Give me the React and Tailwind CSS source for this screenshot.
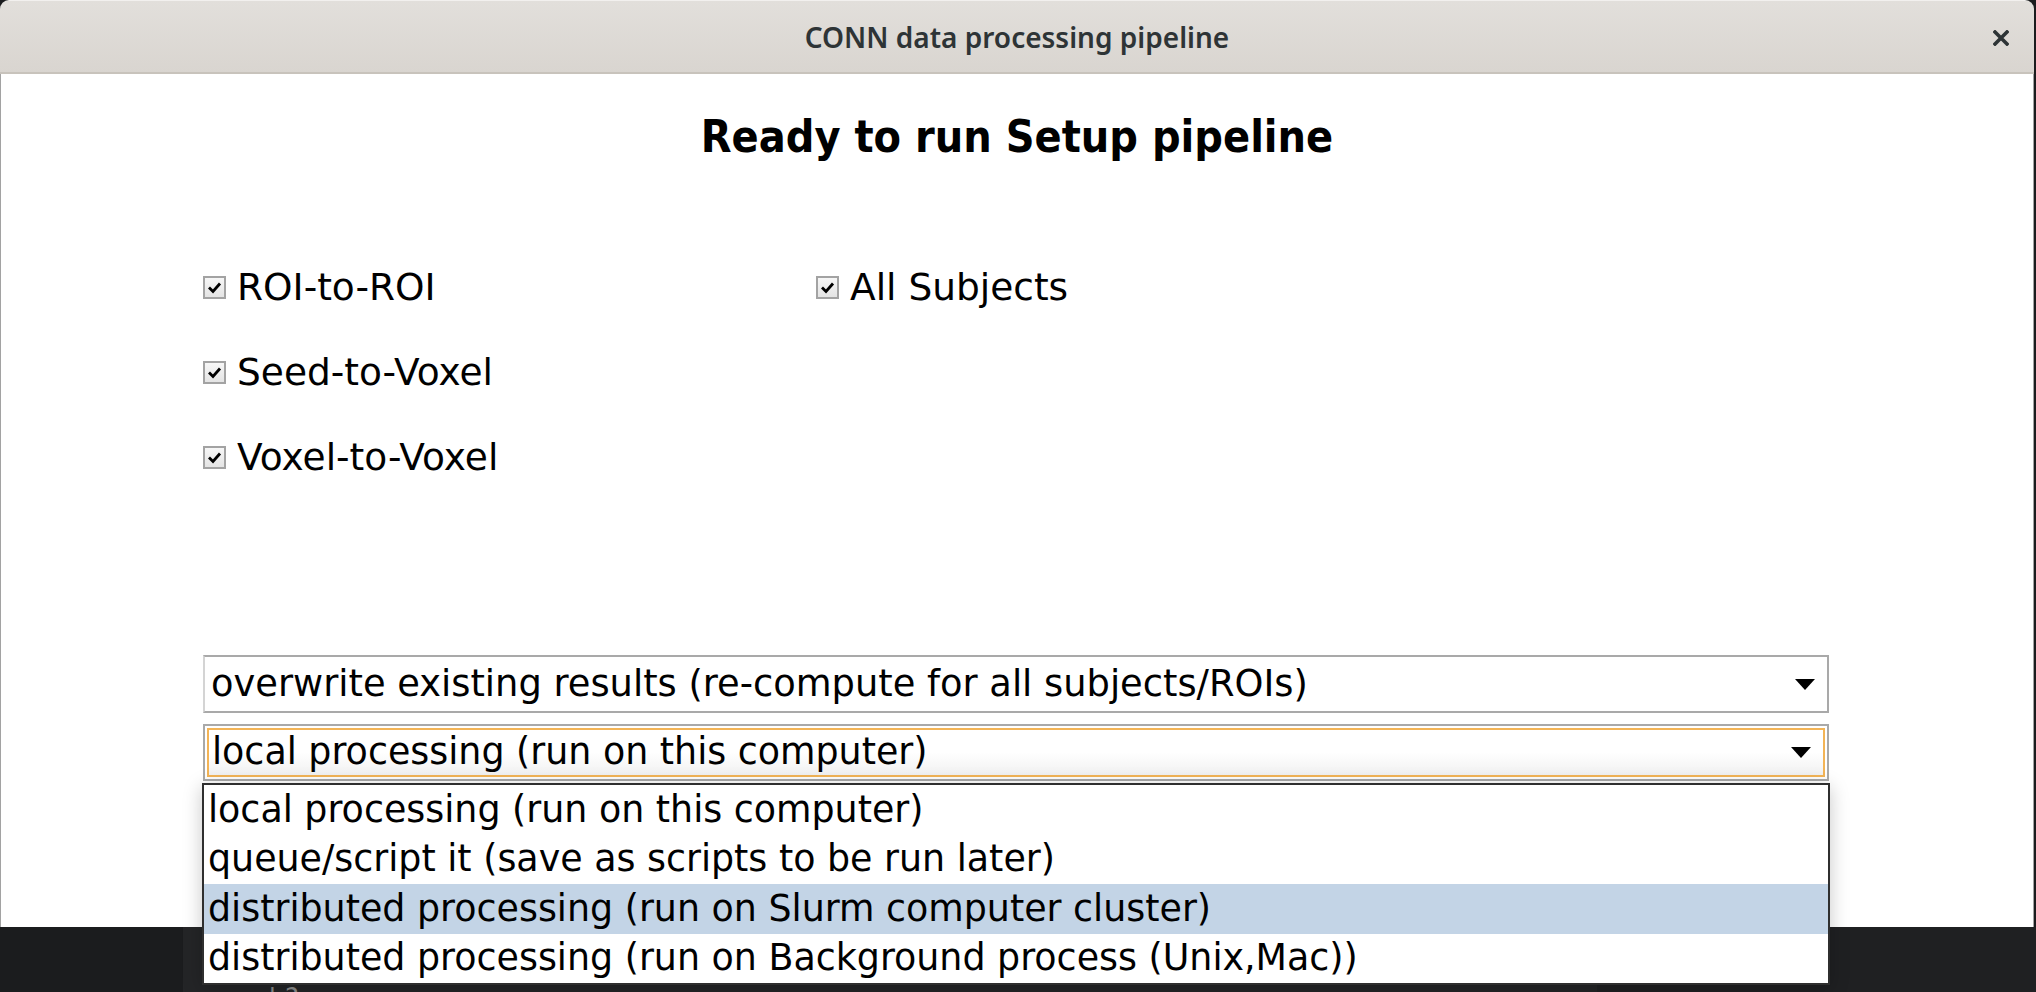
import React from 'react';

const sans = { fontFamily: '"DejaVu Sans", Verdana, sans-serif' };

function CheckItem({ label }) {
  return (
    <div className="flex items-center h-[85px]">
      <span className="w-[23px] h-[23px] border-2 border-[#a3a3a3] bg-gradient-to-b from-[#f7f7f7] to-[#e4e4e4] flex items-center justify-center">
        <svg width="15" height="13" viewBox="0 0 15 13">
          <path d="M2 6.5 L6 10.5 L13 2.5" fill="none" stroke="#000" strokeWidth="2.8" />
        </svg>
      </span>
      <span className="ml-[11px] text-[37.5px] leading-none text-black">{label}</span>
    </div>
  );
}

function Caret() {
  return (
    <svg width="20" height="11" viewBox="0 0 20 11" className="mr-[12px]">
      <path d="M0 0 H20 L10 11 Z" fill="#000" />
    </svg>
  );
}

export default function App() {
  const options = [
    'local processing (run on this computer)',
    'queue/script it (save as scripts to be run later)',
    'distributed processing (run on Slurm computer cluster)',
    'distributed processing (run on Background process (Unix,Mac))',
  ];

  return (
    <div className="w-[2036px] h-[992px] relative overflow-hidden bg-[#1b1c1e]" style={sans}>
      {/* window */}
      <div className="h-[927px] flex flex-col rounded-t-[9px] overflow-hidden mr-[2px]">
        <div className="h-[74px] shrink-0 relative flex items-center justify-center border-t border-[#f2f0ee] border-b-2 border-b-[#c8c3bc] bg-gradient-to-b from-[#e2dfdb] to-[#d9d5d0]">
          <span
            className="text-[28px] font-semibold text-[#2e3436]"
            style={{ fontFamily: '"Noto Sans", "Open Sans", sans-serif' }}
          >
            CONN data processing pipeline
          </span>
          <svg width="16" height="16" viewBox="0 0 16 16" className="absolute right-[25px] top-[29px]">
            <path d="M2 2 L14 14 M14 2 L2 14" stroke="#2e3436" strokeWidth="3.6" strokeLinecap="square" />
          </svg>
        </div>

        <div className="flex-1 bg-white border-x border-[#a2a2a2] flex flex-col">
          <h1
            className="mt-[39px] h-[48px] leading-[48px] text-center text-[44.5px] font-bold text-black"
            style={{ fontFamily: '"DejaVu Sans Condensed", "DejaVu Sans", sans-serif', fontStretch: 'condensed' }}
          >
            Ready to run Setup pipeline
          </h1>

          <div className="mt-[84px] pl-[202px] flex">
            <div className="w-[613px] flex flex-col">
              <CheckItem label="ROI-to-ROI" />
              <CheckItem label="Seed-to-Voxel" />
              <CheckItem label="Voxel-to-Voxel" />
            </div>
            <div className="flex flex-col">
              <CheckItem label="All Subjects" />
            </div>
          </div>

          <div className="mt-[155px] ml-[202px] w-[1626px] flex flex-col gap-[11px]">
            <div className="h-[58px] border-2 border-[#a9a9a9] border-l-[#d4d4d4] bg-white flex items-center justify-between pl-[6px]">
              <span className="text-[36.8px] leading-none text-black">
                overwrite existing results (re-compute for all subjects/ROIs)
              </span>
              <Caret />
            </div>
            <div className="h-[57px] border-2 border-[#a9a9a9] p-[2px]">
              <div className="h-full border-2 border-[#f3b456] bg-gradient-to-b from-white via-white to-[#f1f1f1] flex items-center justify-between pl-[3px]">
                <span className="text-[36.4px] leading-none text-black">local processing (run on this computer)</span>
                <Caret />
              </div>
            </div>
          </div>
        </div>
      </div>

      {/* taskbar strip */}
      <div className="h-[65px] flex relative">
        <div className="w-[183px] bg-[#1b1c1e]" />
        <div className="w-[1414px] bg-[#242527]" />
        <div className="flex-1 bg-[#1f2022]" />
        <span className="absolute left-[268px] top-[52px] text-[26px] text-[#8d8d8d]">| ?</span>
      </div>

      {/* open dropdown list */}
      <div className="absolute left-[202px] top-[783px] w-[1628px] border-2 border-[#2f2f2f] bg-white shadow-[0_4px_18px_rgba(0,0,0,0.22)]">
        {options.map((o, i) => (
          <div
            key={o}
            className={`h-[49.5px] flex items-center pl-[4px] text-[36.4px] leading-none text-black ${
              i === 2 ? 'bg-[#c3d4e6]' : ''
            }`}
          >
            {o}
          </div>
        ))}
      </div>
    </div>
  );
}
